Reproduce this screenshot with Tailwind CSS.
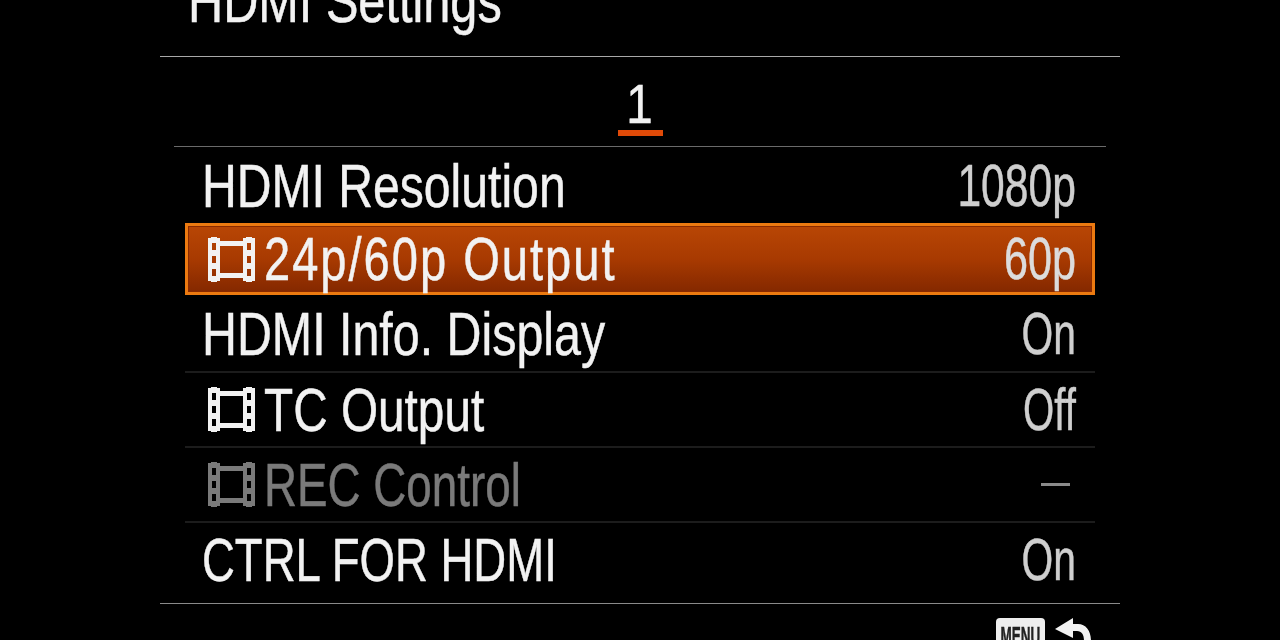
<!DOCTYPE html>
<html lang="en">
<head>
    <meta charset="UTF-8">
    <title>HDMI Settings</title>
    <script src="https://cdn.jsdelivr.net/npm/@tailwindcss/browser@4"></script>
</head>
<body class="bg-black">
    <svg width="0" height="0" class="absolute">
        <symbol id="film" viewBox="0 0 47 45">
            <path fill="currentColor" fill-rule="evenodd" d="M0 1h3V0h6v1h3v3h23V1h3V0h6v1h3v43h-3v1h-6v-1h-3v-3H12v3H9v1H3v-1H0zM4 6v7h4V6zm0 13v7h4v-7zm0 13v7h4v-7zM39 6v7h4V6zm0 13v7h4v-7zm0 13v7h4v-7zM12 9v27h23V9z"/>
        </symbol>
    </svg>

    <div class="w-[1280px] h-[640px] overflow-hidden bg-black font-['Liberation_Sans',sans-serif] text-[#f2f2f2] blur-[0.5px] [-webkit-text-stroke:0.5px]">
        <div class="w-[960px] h-[640px] mx-auto flex flex-col">
            <!-- Title -->
            <div class="h-[57px] shrink-0 border-b border-[#a8a8a8] overflow-hidden relative">
                <p class="absolute left-[28px] top-[-30px] text-[62px] leading-none origin-left scale-x-[0.785] whitespace-nowrap">HDMI Settings</p>
            </div>

            <!-- Page tab -->
            <div class="h-[89px] shrink-0 flex flex-col items-center justify-end pb-[10px]">
                <span class="text-[56px] leading-[50px] scale-x-[0.85]">1</span>
                <span class="w-[45px] h-[6px] bg-[#e04a08] mt-px"></span>
            </div>

            <!-- Rows -->
            <div class="mx-[14px] border-t border-[#6a6a6a] flex flex-col shrink-0 h-[457px] pt-px">
                <div class="mx-[11px] h-[75px] shrink-0 flex items-center justify-between pl-[17px] pr-[19px]">
                    <span class="text-[62px] leading-none origin-left scale-x-[0.776] whitespace-nowrap">HDMI Resolution</span>
                    <span class="text-[60px] leading-none origin-right scale-x-[0.71] text-[#cfcfcf] whitespace-nowrap">1080p</span>
                </div>

                <div class="mx-[11px] h-[72px] shrink-0 border-[3px] border-[#ec7a10] shadow-[inset_0_0_0_1px_#8a2a00] bg-gradient-to-b from-[#b84605] via-[#a83a01] to-[#842800] flex items-center justify-between pl-[20px] pr-[16px] mb-[2px]">
                    <span class="flex items-center gap-[9px]">
                        <svg width="47" height="45" class="shrink-0 text-[#f2f2f2]"><use href="#film"/></svg>
                        <span class="text-[62px] leading-none origin-left scale-x-[0.76] tracking-[2.6px] whitespace-nowrap">24p/60p Output</span>
                    </span>
                    <span class="text-[60px] leading-none origin-right scale-x-[0.72] text-[#dcdcdc] whitespace-nowrap">60p</span>
                </div>

                <div class="mx-[11px] h-[76px] shrink-0 border-b-2 border-[#1c1c1c] flex items-center justify-between pl-[17px] pr-[19px]">
                    <span class="text-[62px] leading-none origin-left scale-x-[0.78] whitespace-nowrap">HDMI Info. Display</span>
                    <span class="text-[60px] leading-none origin-right scale-x-[0.68] text-[#cfcfcf] whitespace-nowrap">On</span>
                </div>

                <div class="mx-[11px] h-[75px] shrink-0 border-b-2 border-[#1c1c1c] flex items-center justify-between pl-[23px] pr-[19px]">
                    <span class="flex items-center gap-[9px]">
                        <svg width="47" height="45" class="shrink-0 text-[#f2f2f2]"><use href="#film"/></svg>
                        <span class="text-[62px] leading-none origin-left scale-x-[0.77] whitespace-nowrap">TC Output</span>
                    </span>
                    <span class="text-[60px] leading-none origin-right scale-x-[0.67] text-[#cfcfcf] whitespace-nowrap">Off</span>
                </div>

                <div class="mx-[11px] h-[75px] shrink-0 border-b-2 border-[#1c1c1c] flex items-center justify-between pl-[23px] pr-[25px] text-[#7a7a7a]">
                    <span class="flex items-center gap-[9px]">
                        <svg width="47" height="45" class="shrink-0 text-[#7a7a7a]"><use href="#film"/></svg>
                        <span class="text-[62px] leading-none origin-left scale-x-[0.738] whitespace-nowrap">REC Control</span>
                    </span>
                    <span class="w-[29px] h-[3px] bg-[#8a8a8a]"></span>
                </div>

                <div class="mx-[11px] h-[74px] shrink-0 flex items-center justify-between pl-[17px] pr-[19px]">
                    <span class="text-[62px] leading-none origin-left scale-x-[0.734] whitespace-nowrap">CTRL FOR HDMI</span>
                    <span class="text-[60px] leading-none origin-right scale-x-[0.68] text-[#cfcfcf] whitespace-nowrap">On</span>
                </div>
            </div>

            <!-- Footer -->
            <div class="border-t border-[#8a8a8a] shrink-0 h-[36px] flex justify-end items-start pt-[14px] pr-[29px] gap-[10px]">
                <span class="w-[49px] h-[40px] rounded-[4px] bg-[#eeeeee] text-[#222] shrink-0 flex justify-center pt-[5px] overflow-hidden">
                    <span class="text-[26px] leading-[26px] font-bold scale-x-[0.52] whitespace-nowrap">MENU</span>
                </span>
                <svg width="36" height="23" viewBox="0 0 36 23" class="shrink-0"><path fill="#f2f2f2" d="M0 11 18 0V6H23C31 6 36 13 36 23H29C29 17 27 13 22 13H18V20Z"/></svg>
            </div>
        </div>
    </div>
</body>
</html>
